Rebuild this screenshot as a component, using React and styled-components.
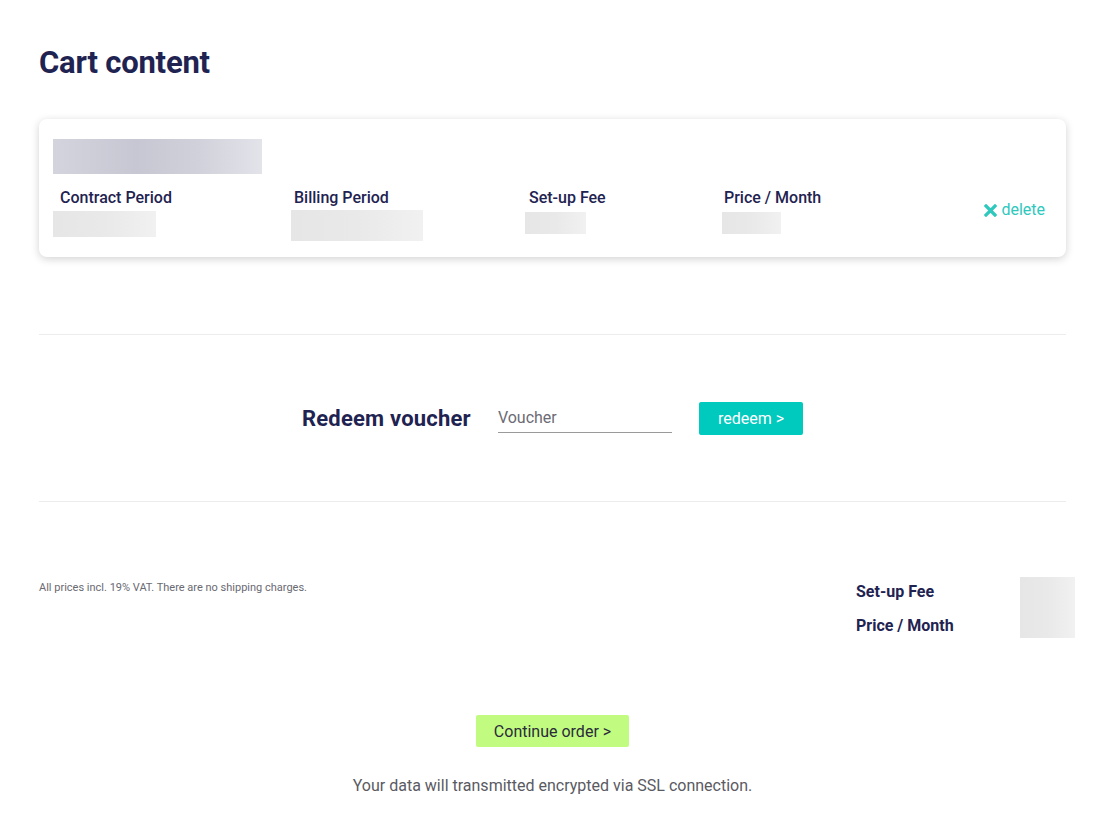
import React from "react";
import styled, { createGlobalStyle } from "styled-components";

const GlobalStyle = createGlobalStyle`
  body {
    margin: 0;
    background: #ffffff;
    font-family: 'Roboto', 'Noto Sans', sans-serif;
    color: #1f2351;
  }
`;

const Page = styled.div`
  width: 1027px;
  padding: 0 50px 40px 39px;
`;

const Title = styled.h1`
  margin: 0;
  padding-top: 45px;
  font-size: 31px;
  line-height: 36px;
  font-weight: 700;
  color: #1f2351;
  letter-spacing: -0.2px;
`;

const Card = styled.div`
  margin-top: 38px;
  background: #fff;
  border-radius: 8px;
  box-shadow: 0 2px 9px rgba(0, 0, 0, 0.18);
  padding: 20px 21px 16px 14px;
`;

const Blur = styled.div`
  width: ${p => p.w}px;
  height: ${p => p.h}px;
  margin-top: ${p => p.mt || 0}px;
  background: ${p => p.dark
    ? "linear-gradient(90deg, #d3d4dd 0%, #c6c7d2 40%, #d0d1da 70%, #e3e4ea 100%)"
    : "linear-gradient(90deg, #e6e6e6 0%, #e9e9e9 50%, #f1f1f1 100%)"};
  filter: blur(0.6px);
`;

const Row = styled.div`
  display: flex;
  align-items: flex-start;
  margin-top: 13px;
`;

const Col = styled.div`
  width: ${p => p.w}px;
  flex-shrink: 0;
`;

const Label = styled.div`
  padding-left: ${p => p.pl || 0}px;
  font-size: 16px;
  line-height: 22px;
  font-weight: 500;
  color: #1f2351;
`;

const Delete = styled.a`
  margin-left: auto;
  margin-top: 13px;
  display: flex;
  align-items: center;
  gap: 4px;
  color: #2ec8bd;
  font-size: 16px;
  line-height: 20px;
  text-decoration: none;
  cursor: pointer;
`;

const Rule = styled.hr`
  margin: ${p => p.mt}px 0 0;
  border: 0;
  border-top: 1px solid #ececec;
`;

const Voucher = styled.div`
  display: flex;
  justify-content: center;
  align-items: center;
  padding: 67px 0 66px;
`;

const VoucherTitle = styled.h2`
  margin: 0 27px 0 0;
  font-size: 22px;
  letter-spacing: 0.2px;
  font-weight: 700;
  color: #1f2351;
`;

const Input = styled.input`
  width: 174px;
  border: 0;
  border-bottom: 1px solid #9a9a9a;
  padding: 0 0 5px;
  margin: 4px 27px 0 0;
  font-family: inherit;
  font-size: 16px;
  color: #333;
  outline: none;
  &::placeholder {
    color: #6b6b75;
  }
`;

const Button = styled.button`
  border: 0;
  border-radius: 2px;
  background: ${p => p.bg};
  color: ${p => p.fg};
  font-family: inherit;
  font-size: 16px;
  height: ${p => p.h}px;
  padding: 0 ${p => p.px}px;
  cursor: pointer;
`;

const Summary = styled.div`
  display: flex;
  align-items: flex-start;
  margin-top: 75px;
  margin-right: -9px;
`;

const Note = styled.p`
  margin: 4px 0 0;
  font-size: 11px;
  color: #6a6a72;
  flex: 1;
`;

const Totals = styled.div`
  display: flex;
  flex-direction: column;
  gap: 14px;
  padding-top: 5px;
  width: 164px;
`;

const TotalLabel = styled.div`
  font-size: 16px;
  line-height: 20px;
  font-weight: 700;
  color: #1f2351;
`;

const Footer = styled.div`
  display: flex;
  flex-direction: column;
  align-items: center;
  margin-top: 77px;
`;

const Secure = styled.p`
  margin: 29px 0 0;
  font-size: 16px;
  color: #5a5a62;
`;

const XIcon = () => (
  <svg width="13" height="13" viewBox="0 0 13 13">
    <path d="M2 2 L11 11 M11 2 L2 11" stroke="#2ec8bd" strokeWidth="3.2" strokeLinecap="square" />
  </svg>
);

const columns = [
  { label: "Contract Period", w: 238, pl: 7, bw: 103, bh: 26, mt: 2 },
  { label: "Billing Period", w: 234, pl: 3, bw: 132, bh: 31, mt: 1 },
  { label: "Set-up Fee", w: 197, pl: 4, bw: 61, bh: 22, mt: 3 },
  { label: "Price / Month", w: 200, pl: 2, bw: 59, bh: 22, mt: 3 },
];

const App = () => (
  <>
    <GlobalStyle />
    <Page>
      <Title>Cart content</Title>
      <Card>
        <Blur dark w={209} h={35} />
        <Row>
          {columns.map(c => (
            <Col key={c.label} w={c.w}>
              <Label pl={c.pl}>{c.label}</Label>
              <Blur w={c.bw} h={c.bh} mt={c.mt} />
            </Col>
          ))}
          <Delete><XIcon />delete</Delete>
        </Row>
      </Card>
      <Rule mt={77} />
      <Voucher>
        <VoucherTitle>Redeem voucher</VoucherTitle>
        <Input placeholder="Voucher" />
        <Button bg="#00c9be" fg="#ffffff" h={33} px={19}>redeem &gt;</Button>
      </Voucher>
      <Rule mt={0} />
      <Summary>
        <Note>All prices incl. 19% VAT. There are no shipping charges.</Note>
        <Totals>
          <TotalLabel>Set-up Fee</TotalLabel>
          <TotalLabel>Price / Month</TotalLabel>
        </Totals>
        <Blur w={55} h={61} />
      </Summary>
      <Footer>
        <Button bg="#c1fc81" fg="#2b2b3a" h={32} px={18}>Continue order &gt;</Button>
        <Secure>Your data will transmitted encrypted via SSL connection.</Secure>
      </Footer>
    </Page>
  </>
);

export default App;
